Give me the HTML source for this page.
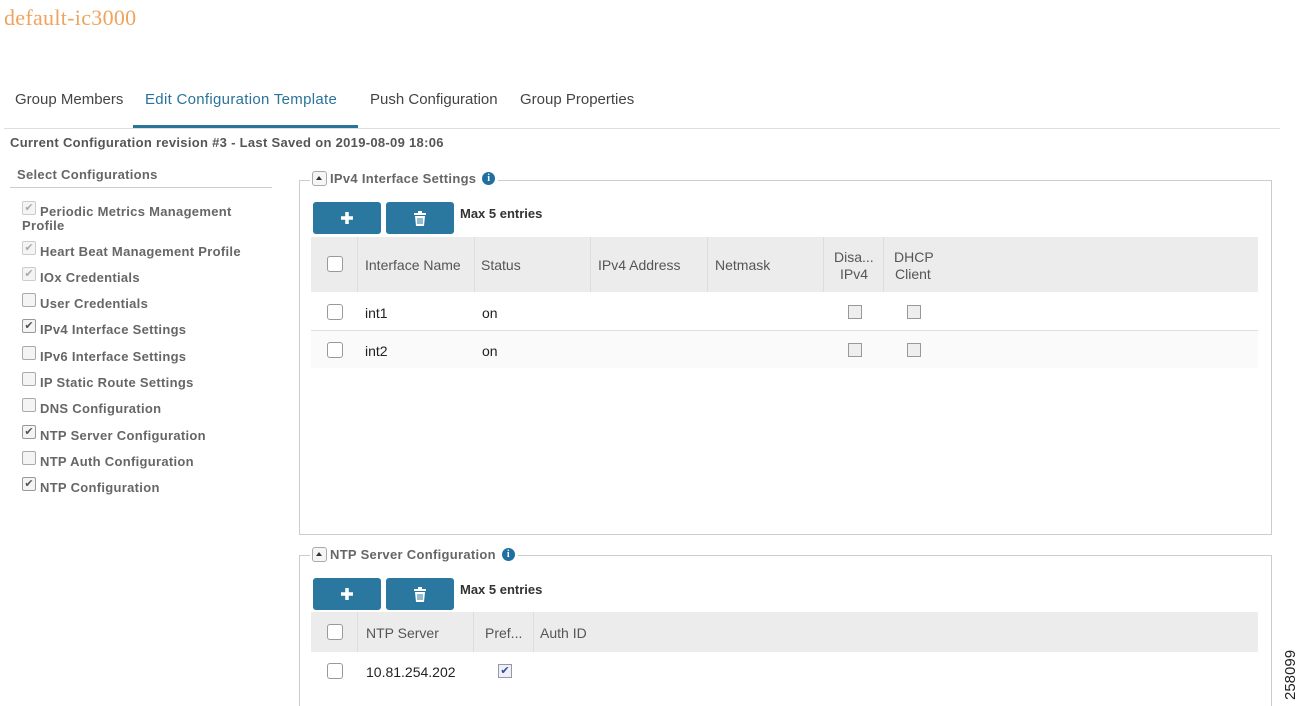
<!DOCTYPE html>
<html style="overflow:hidden;height:706px"><head><meta charset="utf-8"><style>
body{margin:0;width:1302px;height:706px;background:#fff;position:relative;overflow:hidden;font-family:"Liberation Sans",sans-serif;color:#333}
.a{position:absolute;white-space:nowrap}
.t{font-size:15px;color:#444;top:91px}
.lb{font-size:13px;font-weight:bold;color:#666;letter-spacing:.3px}
.cb{position:absolute;width:12px;height:12px;border:1px solid #aaa;border-radius:2px;background:#f4f4f4}
.ck{position:absolute;width:12px;height:12px;border:1px solid #999;border-radius:2px;background:#f4f4f4;font-size:11px;line-height:12px;text-align:center;color:#555}
.bx{position:absolute;width:14px;height:14px;border:1px solid #999;border-radius:3px;background:#fff}
.sq{position:absolute;width:12px;height:12px;border:1px solid #999;background:#eee}
.btn{position:absolute;width:68px;height:32px;background:#2a78a0;border-radius:3px}
.fs{position:absolute;border:1px solid #ccc}
.hd{position:absolute;background:#ececec}
.th{position:absolute;font-size:14px;color:#555}
.td{position:absolute;font-size:14px;color:#222}
.vl{position:absolute;width:1px;background:#ddd}
.leg{position:absolute;background:#fff;font-size:13px;font-weight:bold;color:#666;letter-spacing:.3px;padding:0 3px 0 2px;height:16px;line-height:16px}
.arr{display:inline-block;width:13px;height:13px;border:1px solid #aaa;border-radius:3px;vertical-align:-3px;margin-right:3px;position:relative;background:#f6f6f6}
.arr:after{content:"";position:absolute;left:3px;top:4px;border-left:3.5px solid transparent;border-right:3.5px solid transparent;border-bottom:4px solid #333}
.inf{display:inline-block;width:13px;height:13px;border-radius:50%;background:#1f6fa0;color:#fff;font-size:10px;text-align:center;line-height:13px;font-weight:bold;font-family:"Liberation Serif",serif;margin-left:6px;vertical-align:top;margin-top:1px}
</style></head><body>
<div class="a" style="left:4px;top:5px;font-family:'Liberation Serif',serif;font-size:22px;color:#f0a35c;letter-spacing:.3px">default-ic3000</div>

<div class="a t" style="left:15px">Group Members</div>
<div class="a t" style="left:145px;color:#2a7399;letter-spacing:.3px">Edit Configuration Template</div>
<div class="a t" style="left:370px">Push Configuration</div>
<div class="a t" style="left:520px">Group Properties</div>
<div class="a" style="left:4px;top:128px;width:1276px;height:1px;background:#ddd"></div>
<div class="a" style="left:133px;top:125px;width:225px;height:3px;background:#2a7399"></div>
<div class="a lb" style="left:10px;top:135px;color:#555">Current Configuration revision #3 - Last Saved on 2019-08-09 18:06</div>

<div class="a lb" style="left:17px;top:167px">Select Configurations</div>
<div class="a" style="left:10px;top:187px;width:262px;height:1px;background:#ccc"></div>

<div class="ck" style="left:22px;top:201px;color:#aaa;border-color:#ccc">✔</div>
<div class="a lb" style="left:40px;top:204px">Periodic Metrics Management</div>
<div class="a lb" style="left:22px;top:218px">Profile</div>
<div class="ck" style="left:22px;top:241px;color:#aaa;border-color:#ccc">✔</div><div class="a lb" style="left:40px;top:244px">Heart Beat Management Profile</div>
<div class="ck" style="left:22px;top:267px;color:#aaa;border-color:#ccc">✔</div><div class="a lb" style="left:40px;top:270px">IOx Credentials</div>
<div class="cb" style="left:22px;top:293px"></div><div class="a lb" style="left:40px;top:296px">User Credentials</div>
<div class="ck" style="left:22px;top:319px">✔</div><div class="a lb" style="left:40px;top:322px">IPv4 Interface Settings</div>
<div class="cb" style="left:22px;top:346px"></div><div class="a lb" style="left:40px;top:349px">IPv6 Interface Settings</div>
<div class="cb" style="left:22px;top:372px"></div><div class="a lb" style="left:40px;top:375px">IP Static Route Settings</div>
<div class="cb" style="left:22px;top:398px"></div><div class="a lb" style="left:40px;top:401px">DNS Configuration</div>
<div class="ck" style="left:22px;top:425px">✔</div><div class="a lb" style="left:40px;top:428px">NTP Server Configuration</div>
<div class="cb" style="left:22px;top:451px"></div><div class="a lb" style="left:40px;top:454px">NTP Auth Configuration</div>
<div class="ck" style="left:22px;top:477px">✔</div><div class="a lb" style="left:40px;top:480px">NTP Configuration</div>

<!-- IPv4 -->
<div class="fs" style="left:299px;top:180px;width:971px;height:353px"></div>
<div class="leg" style="left:310px;top:171px"><span class="arr"></span>IPv4 Interface Settings<span class="inf">i</span></div>
<div class="btn" style="left:313px;top:202px"><svg width="68" height="32"><path d="M34 10v12M28 16h12" stroke="#fff" stroke-width="3.5"/></svg></div>
<div class="btn" style="left:386px;top:202px"><svg width="68" height="32"><rect x="28" y="11" width="12" height="2" fill="#fff"/><rect x="32" y="9" width="4" height="2" fill="#fff"/><path d="M29 14h10l-1 10h-8z" fill="#fff"/><path d="M32 16v6M34 16v6M36 16v6" stroke="#2a78a0" stroke-width="1"/></svg></div>
<div class="a" style="left:460px;top:206px;font-size:13px;font-weight:bold;color:#333">Max 5 entries</div>
<div class="hd" style="left:311px;top:237px;width:947px;height:55px"></div>
<div class="vl" style="left:357px;top:237px;height:55px"></div>
<div class="vl" style="left:474px;top:237px;height:55px"></div>
<div class="vl" style="left:590px;top:237px;height:55px"></div>
<div class="vl" style="left:707px;top:237px;height:55px"></div>
<div class="vl" style="left:823px;top:237px;height:55px"></div>
<div class="vl" style="left:883px;top:237px;height:55px"></div>
<div class="bx" style="left:327px;top:256px"></div>
<div class="th" style="left:365px;top:257px">Interface Name</div>
<div class="th" style="left:481px;top:257px">Status</div>
<div class="th" style="left:598px;top:257px">IPv4 Address</div>
<div class="th" style="left:715px;top:257px">Netmask</div>
<div class="th" style="left:834px;top:249px">Disa...</div>
<div class="th" style="left:840px;top:266px">IPv4</div>
<div class="th" style="left:894px;top:249px">DHCP</div>
<div class="th" style="left:895px;top:266px">Client</div>
<div class="bx" style="left:327px;top:304px"></div>
<div class="td" style="left:365px;top:305px">int1</div><div class="td" style="left:482px;top:305px">on</div>
<div class="sq" style="left:848px;top:305px"></div><div class="sq" style="left:907px;top:305px"></div>
<div class="a" style="left:311px;top:330px;width:947px;height:1px;background:#ddd"></div>
<div class="a" style="left:311px;top:331px;width:947px;height:37px;background:#fafafa"></div>
<div class="bx" style="left:327px;top:342px"></div>
<div class="td" style="left:365px;top:343px">int2</div><div class="td" style="left:482px;top:343px">on</div>
<div class="sq" style="left:848px;top:343px"></div><div class="sq" style="left:907px;top:343px"></div>

<!-- NTP -->
<div class="fs" style="left:299px;top:555px;width:971px;height:151px;border-bottom:none"></div>
<div class="leg" style="left:310px;top:547px"><span class="arr"></span>NTP Server Configuration<span class="inf">i</span></div>
<div class="btn" style="left:313px;top:578px"><svg width="68" height="32"><path d="M34 10v12M28 16h12" stroke="#fff" stroke-width="3.5"/></svg></div>
<div class="btn" style="left:386px;top:578px"><svg width="68" height="32"><rect x="28" y="11" width="12" height="2" fill="#fff"/><rect x="32" y="9" width="4" height="2" fill="#fff"/><path d="M29 14h10l-1 10h-8z" fill="#fff"/><path d="M32 16v6M34 16v6M36 16v6" stroke="#2a78a0" stroke-width="1"/></svg></div>
<div class="a" style="left:460px;top:582px;font-size:13px;font-weight:bold;color:#333">Max 5 entries</div>
<div class="hd" style="left:311px;top:612px;width:947px;height:40px"></div>
<div class="vl" style="left:357px;top:612px;height:40px"></div>
<div class="vl" style="left:473px;top:612px;height:40px"></div>
<div class="vl" style="left:533px;top:612px;height:40px"></div>
<div class="bx" style="left:327px;top:624px"></div>
<div class="th" style="left:366px;top:625px">NTP Server</div>
<div class="th" style="left:485px;top:625px">Pref...</div>
<div class="th" style="left:540px;top:625px">Auth ID</div>
<div class="bx" style="left:327px;top:663px"></div>
<div class="td" style="left:366px;top:664px">10.81.254.202</div>
<div class="sq" style="left:498px;top:664px;background:#eef;color:#2a4f8a;font-size:11px;line-height:12px;text-align:center">✔</div>

<div class="a" style="left:1282px;top:700px;transform:rotate(-90deg);transform-origin:0 0;font-size:15px;color:#222">258099</div>
</body></html>
